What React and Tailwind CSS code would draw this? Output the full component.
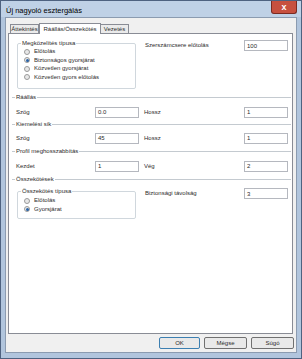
import React from "react";

function Radio({ label, checked }) {
  return (
    <div className="flex items-center h-[8.5px]">
      <span className="ml-[6px] w-[6px] h-[6px] rounded-full border border-[#9a9a9a] bg-[#e8e8e8] flex items-center justify-center">
        {checked && <span className="w-[3px] h-[3px] rounded-full bg-[#2a63a6]" />}
      </span>
      <span className="ml-[4px]">{label}</span>
    </div>
  );
}

function Group({ title, children, h }) {
  return (
    <fieldset className={`ml-[8px] w-[119px] ${h} border border-[#d0d7dd] rounded-[2px] px-0 pb-0`}>
      <legend className="ml-[3px] px-[1px] leading-[8px]">{title}</legend>
      {children}
    </fieldset>
  );
}

function Field({ value }) {
  return (
    <div className="w-[44px] h-[11px] border border-[#b5b8bf] bg-white flex items-center pl-[2px] leading-none">
      {value}
    </div>
  );
}

function Sep({ title, mt }) {
  return (
    <div className={`flex items-center h-[8px] ${mt} pl-[3px] pr-[1px]`}>
      <div className="w-[3px] border-t border-[#c4cad0]" />
      <span className="px-[1px] leading-none">{title}</span>
      <div className="flex-1 border-t border-[#c4cad0]" />
    </div>
  );
}

function Row({ l1, v1, l2, v2, mt }) {
  return (
    <div className={`flex items-center h-[12px] ${mt}`}>
      <span className="ml-[7px] w-[79px]">{l1}</span>
      <Field value={v1} />
      <span className="ml-[5px] flex-1">{l2}</span>
      <div className="mr-[4px]">
        <Field value={v2} />
      </div>
    </div>
  );
}

function Btn({ label, primary }) {
  return (
    <div
      className={`h-[12px] rounded-[2px] border flex items-center justify-center bg-[#e9e9e9] ${
        primary ? "w-[41px] border-[#3c7fb1]" : "w-[43px] border-[#707070]"
      }`}
    >
      {label}
    </div>
  );
}

export default function App() {
  return (
    <div
      className="w-[302px] h-[359px] border border-[#4e6280] bg-[#b1c5dd] flex flex-col text-[6px] text-[#2b2b2b] overflow-hidden"
      style={{ fontFamily: '"Liberation Sans Narrow", "Liberation Sans", Arial, sans-serif' }}
    >
      <div className="h-[16px] shrink-0 flex items-start justify-between bg-[#bfd1e6]">
        <span className="ml-[5px] mt-[4px] text-[7.5px] text-black">Új nagyoló esztergálás</span>
        <div className="mr-[4px] w-[26px] h-[13px] shrink-0 rounded-b-[3px] border border-[#7a2a22] border-t-0 bg-[#c7503f] flex items-center justify-center text-white text-[9px] font-bold leading-none">
          x
        </div>
      </div>
      <div className="mx-[4px] mb-[5px] flex-1 bg-[#f0f0f0] border border-[#8b9bb0] flex flex-col">
        <div className="mt-[4px] ml-[4px] flex items-end h-[11px]">
          <div className="h-[9px] w-[29px] border border-b-0 border-[#898c95] bg-[#ebebeb] flex items-center justify-center leading-none">
            Áttekintés
          </div>
          <div className="h-[11px] w-[62px] border border-b-0 border-[#898c95] bg-white flex items-center justify-center leading-none relative top-[1px]">
            Ráállás/Összekötés
          </div>
          <div className="h-[9px] w-[28px] border border-b-0 border-l-0 border-[#898c95] bg-[#ebebeb] flex items-center justify-center leading-none">
            Vezetés
          </div>
        </div>
        <div className="ml-[2px] w-[285px] h-[301px] border border-[#898c95] bg-white flex flex-col">
          <div className="flex mt-[5px]">
            <Group title="Megközelítés típusa" h="h-[50px]">
              <div className="pt-[0.5px]">
                <Radio label="Előtolás" />
                <Radio label="Biztonságos gyorsjárat" checked />
                <Radio label="Közvetlen gyorsjárat" />
                <Radio label="Közvetlen gyors előtolás" />
              </div>
            </Group>
            <div className="ml-[9px] flex-1 flex items-center justify-between h-[11px] mt-[1px] mr-[4px]">
              <span>Szerszámcsere előtolás</span>
              <Field value="100" />
            </div>
          </div>
          <Sep title="Ráállás" mt="mt-[4px]" />
          <Row l1="Szög" v1="0.0" l2="Hossz" v2="1" mt="mt-[5px]" />
          <Sep title="Kiemelési sík" mt="mt-[2px]" />
          <Row l1="Szög" v1="45" l2="Hossz" v2="1" mt="mt-[4px]" />
          <Sep title="Profil meghosszabbítás" mt="mt-[3px]" />
          <Row l1="Kezdet" v1="1" l2="Vég" v2="2" mt="mt-[5px]" />
          <Sep title="Összekötések" mt="mt-[3px]" />
          <div className="flex mt-[4px]">
            <Group title="Összekötés típusa" h="h-[32px]">
              <div className="pt-[1.5px]">
                <Radio label="Előtolás" />
                <Radio label="Gyorsjárat" checked />
              </div>
            </Group>
            <div className="ml-[9px] flex-1 flex items-center justify-between h-[11px] mt-[1px] mr-[4px]">
              <span>Biztonsági távolság</span>
              <Field value="3" />
            </div>
          </div>
        </div>
        <div className="flex justify-end gap-[4px] mt-[3px] mr-[2px]">
          <Btn label="OK" primary />
          <Btn label="Mégse" />
          <Btn label="Súgó" />
        </div>
      </div>
    </div>
  );
}
